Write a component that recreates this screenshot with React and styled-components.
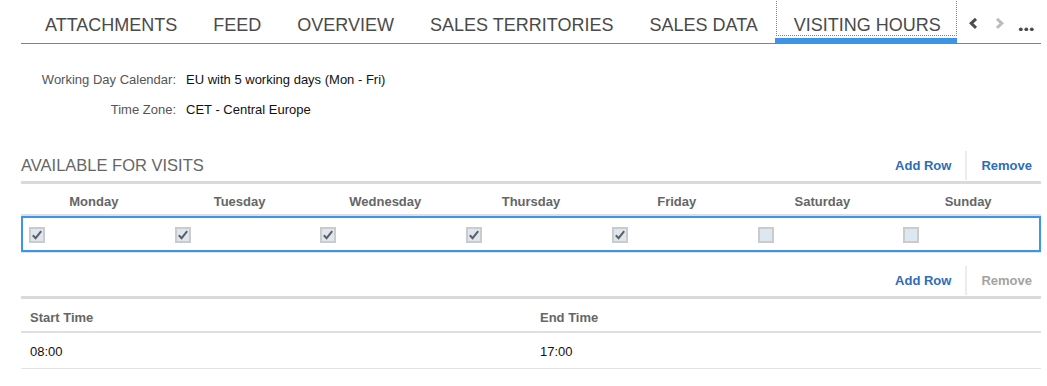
import React from "react";
import styled, { createGlobalStyle, css } from "styled-components";

const GlobalStyle = createGlobalStyle`
  html, body { margin: 0; padding: 0; background: #fff; }
  body { font-family: "Liberation Sans", Arial, sans-serif; }
  * { box-sizing: border-box; }
`;

const BLUE = "#3d94e6";

const Page = styled.div`
  width: 1047px;
  padding: 0 6px 0 21px;
`;

const TabBar = styled.div`
  display: flex;
  height: 44px;
  border-bottom: 1px solid ${BLUE};
  padding-left: 6px;
`;

const Tab = styled.div`
  position: relative;
  padding: 15px 18px 0;
  font-size: 18px;
  line-height: 21px;
  color: #4a4a4a;
  white-space: nowrap;
  ${(p) =>
    p.$active &&
    css`
      &::before {
        content: "";
        position: absolute;
        top: -1px;
        left: 0;
        right: 2px;
        bottom: 7px;
        border: 1px dotted ${BLUE};
      }
      &::after {
        content: "";
        position: absolute;
        left: -1px;
        right: 2px;
        bottom: 0;
        height: 5px;
        background: ${BLUE};
      }
    `}
`;

const Nav = styled.div`
  display: flex;
  align-items: center;
  height: 38px;
  padding-top: 8px;
  margin-left: 8px;
`;

const NavIcon = styled.svg`
  display: block;
  flex: none;
  margin-left: ${(p) => p.$ml || 0}px;
`;

const InfoGrid = styled.div`
  display: grid;
  grid-template-columns: 155px auto;
  column-gap: 10px;
  row-gap: 14px;
  margin-top: 28px;
  font-size: 13px;
  line-height: 16px;
`;

const InfoLabel = styled.div`
  text-align: right;
  color: #555;
`;

const InfoValue = styled.div`
  color: #111;
`;

const Toolbar = styled.div`
  display: flex;
  align-items: flex-start;
  height: 33px;
  border-bottom: 3px solid #dadada;
  margin-top: ${(p) => p.$mt}px;
  padding-right: 9px;
`;

const SectionTitle = styled.div`
  flex: 1;
  align-self: center;
  font-size: 16.5px;
  line-height: 20px;
  color: #666;
  margin-top: -2px;
`;

const ToolButton = styled.div`
  height: 29px;
  display: flex;
  align-items: center;
  padding: 0 ${(p) => (p.$last ? 0 : 14)}px 0 14px;
  font-size: 13px;
  font-weight: bold;
  color: ${(p) => (p.$disabled ? "#a3a3a3" : "#2e6db7")};
  border-left: ${(p) => (p.$sep ? "2px solid #ececec" : "none")};
  cursor: pointer;
`;

const Grid = styled.div`
  display: grid;
  grid-template-columns: repeat(${(p) => p.$cols}, 1fr);
`;

const HeadRow = styled(Grid)`
  height: ${(p) => p.$h}px;
  border-bottom: 2px solid #e0e0e0;
`;

const HeadCell = styled.div`
  padding: 5px 9px 0;
  line-height: ${(p) => p.$lh}px;
  font-size: 13px;
  font-weight: bold;
  color: #666;
  text-align: ${(p) => (p.$center ? "center" : "left")};
  white-space: nowrap;
`;

const BodyRow = styled(Grid)`
  height: ${(p) => p.$h}px;
  align-items: center;
  border-bottom: 1px solid #e2e2e2;
  ${(p) =>
    p.$selected &&
    css`
      box-shadow: inset 0 0 0 2px #3b95e8;
    `}
`;

const BodyCell = styled.div`
  padding-left: ${(p) => p.$pl}px;
  padding-top: 1px;
  font-size: 13px;
  color: #111;
  display: flex;
  align-items: center;
`;

const CheckBox = styled.div`
  width: 16px;
  height: 16px;
  border: 2px solid #cbcbcb;
  background: #dde7f1;
  display: flex;
  align-items: center;
  justify-content: center;
`;

const Check = ({ checked }) => (
  <CheckBox>
    {checked && (
      <svg width="12" height="12" viewBox="0 0 12 12">
        <path d="M1.8 6.2 L4.6 9.2 L10.2 2.2" fill="none" stroke="#5e5e5e" strokeWidth="2" />
      </svg>
    )}
  </CheckBox>
);

const tabs = ["ATTACHMENTS", "FEED", "OVERVIEW", "SALES TERRITORIES", "SALES DATA", "VISITING HOURS"];
const days = [
  ["Monday", true],
  ["Tuesday", true],
  ["Wednesday", true],
  ["Thursday", true],
  ["Friday", true],
  ["Saturday", false],
  ["Sunday", false],
];

export default function App() {
  return (
    <Page>
      <GlobalStyle />
      <TabBar>
        {tabs.map((t) => (
          <Tab key={t} $active={t === "VISITING HOURS"}>
            {t}
          </Tab>
        ))}
        <Nav>
          <NavIcon width="12" height="16" viewBox="0 0 12 16">
            <path d="M9 3.8 L4.2 8.3 L9 12.8" fill="none" stroke="#4d4d4d" strokeWidth="3" />
          </NavIcon>
          <NavIcon $ml={15} width="12" height="16" viewBox="0 0 12 16">
            <path d="M3 3.8 L7.8 8.3 L3 12.8" fill="none" stroke="#bdbdbd" strokeWidth="3" />
          </NavIcon>
          <NavIcon $ml={11} width="18" height="16" viewBox="0 0 18 16">
            <circle cx="3.8" cy="14.3" r="1.9" fill="#4d4d4d" />
            <circle cx="9.3" cy="14.3" r="1.9" fill="#4d4d4d" />
            <circle cx="14.8" cy="14.3" r="1.9" fill="#4d4d4d" />
          </NavIcon>
        </Nav>
      </TabBar>

      <InfoGrid>
        <InfoLabel>Working Day Calendar:</InfoLabel>
        <InfoValue>EU with 5 working days (Mon - Fri)</InfoValue>
        <InfoLabel>Time Zone:</InfoLabel>
        <InfoValue>CET - Central Europe</InfoValue>
      </InfoGrid>

      <Toolbar $mt={33}>
        <SectionTitle>AVAILABLE FOR VISITS</SectionTitle>
        <ToolButton>Add Row</ToolButton>
        <ToolButton $sep $last>
          Remove
        </ToolButton>
      </Toolbar>
      <HeadRow $cols={7} $h={32}>
        {days.map(([d]) => (
          <HeadCell key={d} $center $lh={25}>
            {d}
          </HeadCell>
        ))}
      </HeadRow>
      <BodyRow $cols={7} $h={37} $selected>
        {days.map(([d, c]) => (
          <BodyCell key={d} $pl={8}>
            <Check checked={c} />
          </BodyCell>
        ))}
      </BodyRow>

      <Toolbar $mt={13}>
        <SectionTitle />
        <ToolButton>Add Row</ToolButton>
        <ToolButton $sep $last $disabled>
          Remove
        </ToolButton>
      </Toolbar>
      <HeadRow $cols={2} $h={34}>
        <HeadCell $lh={27}>Start Time</HeadCell>
        <HeadCell $lh={27}>End Time</HeadCell>
      </HeadRow>
      <BodyRow $cols={2} $h={36}>
        <BodyCell $pl={9}>08:00</BodyCell>
        <BodyCell $pl={9}>17:00</BodyCell>
      </BodyRow>
    </Page>
  );
}
